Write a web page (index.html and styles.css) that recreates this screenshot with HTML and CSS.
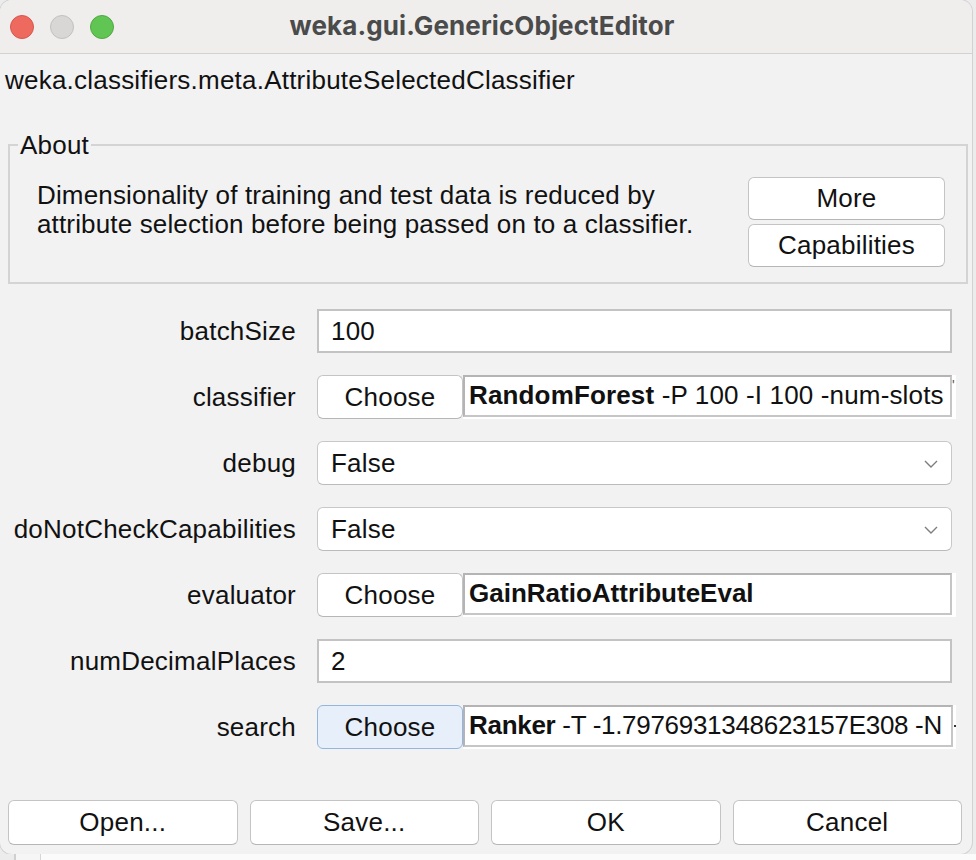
FILE: index.html
```html
<!DOCTYPE html>
<html>
<head>
<meta charset="utf-8">
<link rel="stylesheet" href="styles.css">
</head>
<body>
<div class="screen">
  <div class="window">
    <div class="titlebar">
      <div class="lights">
        <span class="light red"></span>
        <span class="light grey"></span>
        <span class="light green"></span>
      </div>
      <div class="title">weka.gui.GenericObjectEditor</div>
      <div></div>
    </div>
    <div class="body">
      <div class="classname">weka.classifiers.meta.AttributeSelectedClassifier</div>
      <fieldset class="about">
        <legend>About</legend>
        <div class="about-inner">
          <p class="desc">Dimensionality of training and test data is reduced by<br>attribute selection before being passed on to a classifier.</p>
          <div class="about-btns">
            <button class="btn">More</button>
            <button class="btn">Capabilities</button>
          </div>
        </div>
      </fieldset>
      <div class="props">
        <div class="label">batchSize</div>
        <div class="field">100</div>

        <div class="label">classifier</div>
        <div class="chooser">
          <button class="btn choose">Choose</button>
          <div class="obj-wrap"><div class="obj loose"><b>RandomForest</b> -P 100 -I 100 -num-slots</div><span class="tick">'</span></div>
        </div>

        <div class="label">debug</div>
        <div class="combo"><span>False</span><svg class="chev" width="14" height="8" viewBox="0 0 14 8"><path d="M1 1 L7 7 L13 1" fill="none" stroke="#7d7d7d" stroke-width="1.4"/></svg></div>

        <div class="label">doNotCheckCapabilities</div>
        <div class="combo"><span>False</span><svg class="chev" width="14" height="8" viewBox="0 0 14 8"><path d="M1 1 L7 7 L13 1" fill="none" stroke="#7d7d7d" stroke-width="1.4"/></svg></div>

        <div class="label">evaluator</div>
        <div class="chooser">
          <button class="btn choose">Choose</button>
          <div class="obj-wrap"><div class="obj"><b>GainRatioAttributeEval</b></div><span class="tick"></span></div>
        </div>

        <div class="label">numDecimalPlaces</div>
        <div class="field">2</div>

        <div class="label">search</div>
        <div class="chooser">
          <button class="btn choose focused">Choose</button>
          <div class="obj-wrap"><div class="obj tight"><b>Ranker</b> -T -1.7976931348623157E308 -N</div><span class="tick dash"></span></div>
        </div>
      </div>
      <div class="actions">
        <button class="btn">Open...</button>
        <button class="btn">Save...</button>
        <button class="btn">OK</button>
        <button class="btn">Cancel</button>
      </div>
    </div>
  </div>
  <div class="under"></div>
</div>
</body>
</html>
```

FILE: styles.css
```css
* { box-sizing: border-box; }

html, body {
  margin: 0;
  padding: 0;
  background: #ececec;
}

.screen {
  width: 976px;
  height: 860px;
  overflow: hidden;
  display: flex;
  flex-direction: column;
}

.window {
  width: 972px;
  height: 854px;
  flex: none;
  border-radius: 12px;
  overflow: hidden;
  background: #f2f2f2;
  display: flex;
  flex-direction: column;
  box-shadow: 0 0 0 1px #d2d2d2;
  font-family: "Liberation Sans", Arial, sans-serif;
  font-size: 26px;
  letter-spacing: 0.22px;
  color: #111;
}

.titlebar {
  height: 54px;
  flex: none;
  background: #efeeed;
  border-bottom: 1px solid #d3d2d1;
  display: grid;
  grid-template-columns: 1fr auto 1fr;
  align-items: center;
}

.lights {
  display: flex;
  gap: 16px;
  padding-left: 10px;
}

.light {
  width: 24px;
  height: 24px;
  border-radius: 50%;
  display: block;
}
.light.red { background: #ee6a5e; border: 1px solid #d5574c; }
.light.grey { background: #d9d7d5; border: 1px solid #c3c1bf; }
.light.green { background: #61c554; border: 1px solid #50a843; }

.title {
  font-family: "Inter", "Open Sans", sans-serif;
  font-weight: 700;
  font-size: 26px;
  color: #4b4b4b;
  letter-spacing: 0.1px;
  padding-right: 8px;
  margin-top: -3px;
}

.body {
  flex: 1;
  display: flex;
  flex-direction: column;
  min-width: 0;
}

.classname {
  margin-top: 11px;
  padding-left: 5px;
  line-height: 30px;
}

.about {
  margin: 37px 4px 0 8px;
  padding: 0;
  border: 2px solid #d4d4d4;
  min-width: 0;
}

.about legend {
  margin-left: 8px;
  padding: 0 2px;
  line-height: 26px;
}

.about-inner {
  display: flex;
  justify-content: space-between;
  align-items: flex-start;
  padding: 19px 21px 15px 27px;
}

.desc {
  margin: 4px 0 0 0;
  line-height: 29px;
  letter-spacing: 0.15px;
}

.about-btns {
  display: flex;
  flex-direction: column;
  gap: 4px;
  width: 197px;
}

.about-btns .btn {
  height: 43px;
}

.btn {
  font-family: "Liberation Sans", Arial, sans-serif;
  font-size: 26px;
  letter-spacing: 0.22px;
  color: #111;
  background: #fff;
  border: 1px solid #c4c4c4;
  border-bottom-color: #b6b6b6;
  border-radius: 6px;
  padding: 0;
  height: 44px;
}

.props {
  margin-top: 25px;
  padding-right: 20px;
  display: grid;
  grid-template-columns: 296px minmax(0, 1fr);
  column-gap: 21px;
  row-gap: 22px;
  grid-auto-rows: 44px;
}

.label {
  justify-self: end;
  align-self: center;
}

.field {
  background: #fff;
  border: 2px solid #c3c3c3;
  padding-left: 12px;
  display: flex;
  align-items: center;
  min-width: 0;
}

.chooser {
  display: flex;
  align-items: flex-start;
  min-width: 0;
}

.choose {
  width: 146px;
  flex: none;
}

.choose.focused {
  background: #e7effa;
  border-color: #92b6e0;
}

.obj-wrap {
  flex: 1;
  height: 44px;
  background: #fff;
  margin-right: -4px;
  display: flex;
  align-items: flex-start;
  min-width: 0;
}

.obj {
  flex: 1;
  height: 42px;
  border: 2px solid #c6c6c6;
  border-top-color: #b4b4b4;
  border-left-color: #b4b4b4;
  padding-left: 4px;
  line-height: 36px;
  white-space: nowrap;
  letter-spacing: 0;
  overflow: hidden;
  min-width: 0;
}

.obj.loose { letter-spacing: 0.15px; }
.obj.tight { letter-spacing: -0.3px; }

.tick {
  width: 4px;
  flex: none;
  font-size: 14px;
  line-height: 20px;
  color: #555;
  overflow: hidden;
}

.tick.dash {
  height: 2px;
  margin-top: 20px;
  background: #333;
  width: 2px;
  margin-left: 1px;
}

.combo {
  background: #fff;
  border: 1px solid #c8c8c8;
  border-bottom-color: #bbbbbb;
  border-radius: 6px;
  padding: 0 13px;
  display: flex;
  align-items: center;
  justify-content: space-between;
  min-width: 0;
}

.chev { margin-top: 2px; }

.actions {
  margin-top: 51px;
  padding: 0 10px 0 8px;
  display: grid;
  grid-template-columns: repeat(4, 1fr);
  column-gap: 12px;
}

.actions .btn {
  height: 45px;
}

.under {
  height: 6px;
  flex: none;
  background: linear-gradient(to right, #ececec 0 14px, #cfcfcf 14px 16px, #f6f6f6 16px 40px, #d6d6d6 40px 41px, #fbfbfb 41px);
}
```
